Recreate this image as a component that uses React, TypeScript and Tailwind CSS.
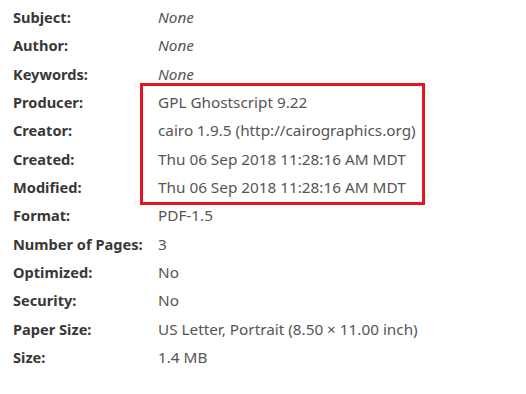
const rows: [string, string, boolean?][] = [
  ["Subject:", "None", true],
  ["Author:", "None", true],
  ["Keywords:", "None", true],
  ["Producer:", "GPL Ghostscript 9.22"],
  ["Creator:", "cairo 1.9.5 (http://cairographics.org)"],
  ["Created:", "Thu 06 Sep 2018 11:28:16 AM MDT"],
  ["Modified:", "Thu 06 Sep 2018 11:28:16 AM MDT"],
  ["Format:", "PDF-1.5"],
  ["Number of Pages:", "3"],
  ["Optimized:", "No"],
  ["Security:", "No"],
  ["Paper Size:", "US Letter, Portrait (8.50 × 11.00 inch)"],
  ["Size:", "1.4 MB"],
];

export default function App() {
  return (
    <div className="relative w-[526px] h-[394px] bg-white font-['Noto_Sans',sans-serif]">
      <div className="grid grid-cols-[145px_1fr] pt-[3px] pl-[13px]">
        {rows.map(([label, value, italic]) => (
          <div key={label} className="contents">
            <div className="leading-[28.33px] text-[14.6px] font-bold text-[#383838] whitespace-nowrap">{label}</div>
            <div className={`leading-[28.33px] text-[15.3px] text-[#555555] whitespace-nowrap ${italic ? "italic" : ""}`}>
              {value}
            </div>
          </div>
        ))}
      </div>
      {/* highlight box */}
      <div className="absolute left-[140px] top-[83px] w-[285px] h-[122px] border-[3px] border-[#e8141b]" />
    </div>
  );
}
